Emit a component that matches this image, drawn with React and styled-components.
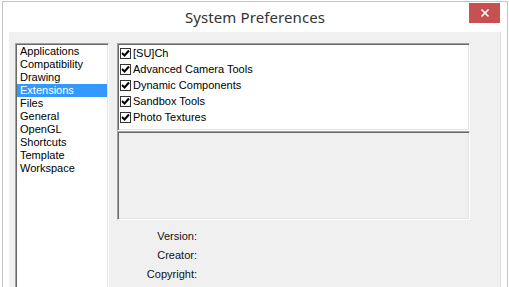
import React from "react";
import styled, { createGlobalStyle } from "styled-components";

const Global = createGlobalStyle`
  html, body { margin: 0; padding: 0; background: #ffffff; overflow: hidden; }
  body { font-family: "Liberation Sans", Arial, sans-serif; }
`;

const Frame = styled.div`
  margin: 1px 0 0 2px;
  width: 504px;
  height: 286px;
  border: 1px solid #c4c4c4;
  border-bottom: none;
  background: #ffffff;
  display: flex;
  flex-direction: column;
  overflow: hidden;
`;

const TitleBar = styled.div`
  height: 30px;
  flex: none;
  display: flex;
  align-items: flex-start;
  position: relative;
`;

const Title = styled.div`
  flex: 1;
  text-align: center;
  font-family: "Noto Sans", "Open Sans", sans-serif;
  font-size: 15px;
  line-height: 30px;
  color: #333333;
  letter-spacing: 0.1px;
`;

const CloseButton = styled.div`
  position: absolute;
  top: 1px;
  right: 7px;
  width: 31px;
  height: 20px;
  background: #c75050;
  display: flex;
  align-items: center;
  justify-content: center;
`;

const Body = styled.div`
  margin: 0 6px;
  flex: 1;
  min-height: 0;
  overflow: hidden;
  background: #f0f0f0;
  border-right: 1px solid #dcdcdc;
  padding: 11px 6px 0 6px;
  display: flex;
  gap: 8px;
  font-family: "Liberation Sans", Arial, sans-serif;
  font-size: 11px;
  color: #000;
`;

const Sunken = styled.div`
  box-sizing: border-box;
  flex: none;
  border-style: solid;
  border-width: 1px;
  border-color: #a0a0a0 #ffffff #ffffff #a0a0a0;
  box-shadow: inset 1px 1px 0 #696969, inset -1px -1px 0 #e3e3e3;
`;

const ListBox = styled(Sunken)`
  width: 94px;
  height: 270px;
  background: #ffffff;
  padding: 1px 1px 0 1px;
`;

const ListItem = styled.div`
  height: 13px;
  line-height: 13px;
  padding-left: 3px;
  white-space: nowrap;
  background: ${(p) => (p.$selected ? "#3399ff" : "transparent")};
  color: ${(p) => (p.$selected ? "#ffffff" : "#000000")};
`;

const RightCol = styled.div`
  width: 353px;
  display: flex;
  flex-direction: column;
`;

const CheckList = styled(Sunken)`
  height: 88px;
  background: #ffffff;
  padding: 1px 2px 0 2px;
`;

const CheckRow = styled.div`
  height: 16px;
  display: flex;
  align-items: center;
  gap: 2px;
  white-space: nowrap;
`;

const Box = styled.div`
  width: 11px;
  height: 11px;
  box-sizing: border-box;
  border: 1px solid #333333;
  background: #ffffff;
  display: flex;
  align-items: center;
  justify-content: center;
`;

const InfoBox = styled(Sunken)`
  height: 89px;
  background: #f0f0f0;
`;

const Labels = styled.div`
  padding-top: 7px;
  display: grid;
  grid-template-columns: 80px;
  grid-auto-rows: 19px;
`;

const Label = styled.div`
  text-align: right;
  line-height: 19px;
  color: #111;
`;

const items = [
  "Applications",
  "Compatibility",
  "Drawing",
  "Extensions",
  "Files",
  "General",
  "OpenGL",
  "Shortcuts",
  "Template",
  "Workspace",
];

const extensions = [
  "[SU]Ch",
  "Advanced Camera Tools",
  "Dynamic Components",
  "Sandbox Tools",
  "Photo Textures",
];

const Check = () => (
  <svg width="9" height="9" viewBox="0 0 9 9">
    <path d="M1 4 L3.5 6.5 L8 1.5" stroke="#000" strokeWidth="2" fill="none" />
  </svg>
);

export default function App() {
  return (
    <>
      <Global />
      <Frame>
        <TitleBar>
          <Title>System Preferences</Title>
          <CloseButton>
            <svg width="10" height="10" viewBox="0 0 10 10">
              <path d="M1.5 1.5 L8.5 8.5 M8.5 1.5 L1.5 8.5" stroke="#fff" strokeWidth="1.6" />
            </svg>
          </CloseButton>
        </TitleBar>
        <Body>
          <ListBox>
            {items.map((it) => (
              <ListItem key={it} $selected={it === "Extensions"}>
                {it}
              </ListItem>
            ))}
          </ListBox>
          <RightCol>
            <CheckList>
              {extensions.map((e) => (
                <CheckRow key={e}>
                  <Box>
                    <Check />
                  </Box>
                  {e}
                </CheckRow>
              ))}
            </CheckList>
            <InfoBox />
            <Labels>
              <Label>Version:</Label>
              <Label>Creator:</Label>
              <Label>Copyright:</Label>
            </Labels>
          </RightCol>
        </Body>
      </Frame>
    </>
  );
}
